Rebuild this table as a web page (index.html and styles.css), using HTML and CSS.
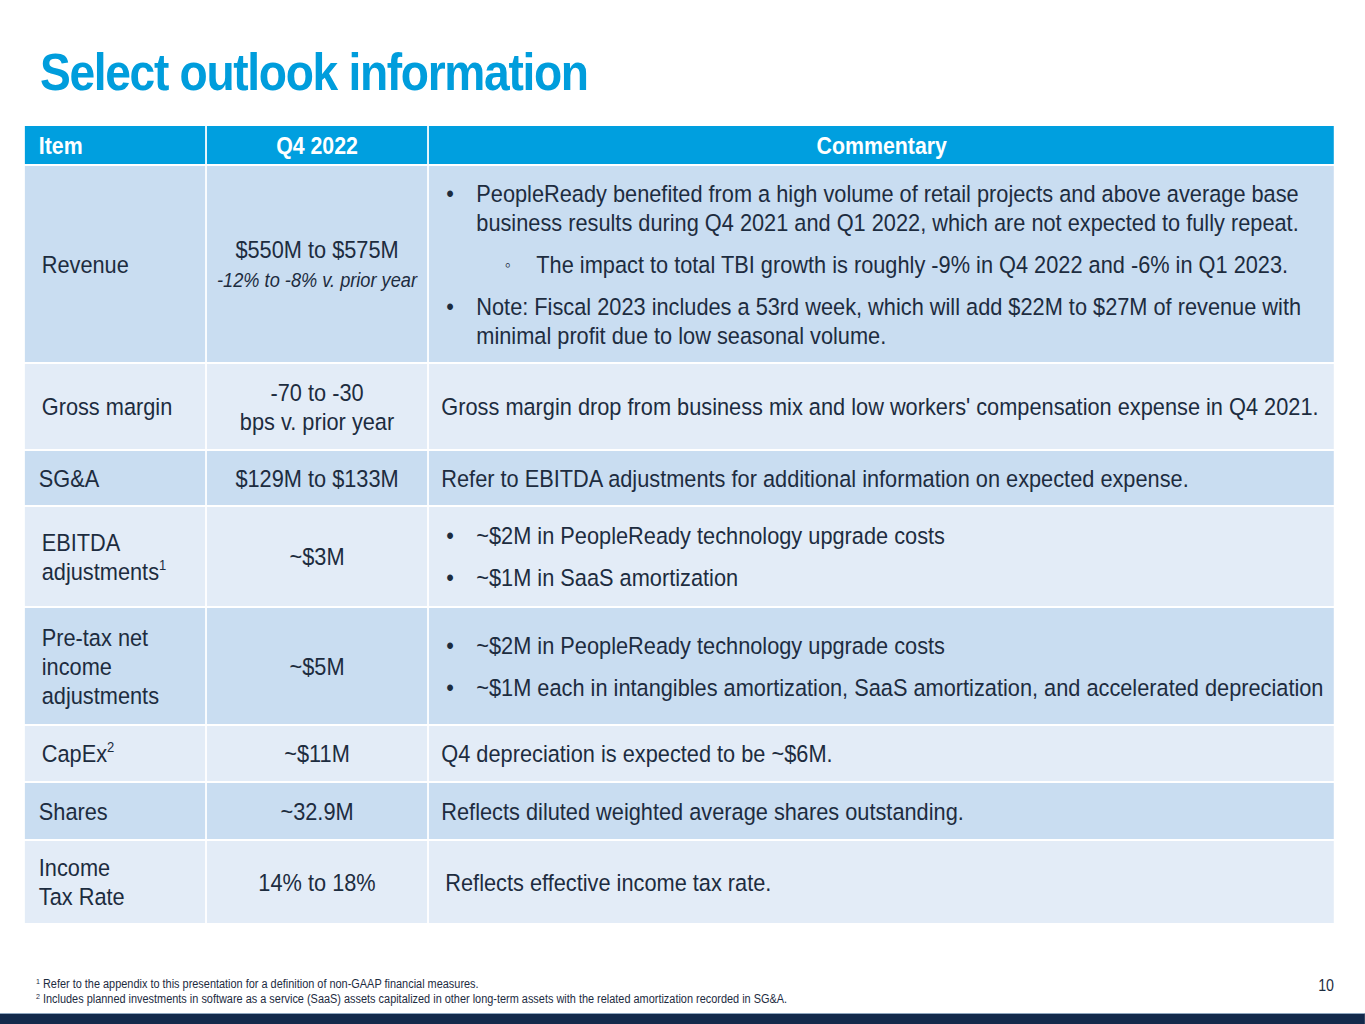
FILE: index.html
```html
<!DOCTYPE html>
<html lang="en">
<head>
<meta charset="utf-8">
<title>Select outlook information</title>
<link rel="stylesheet" href="styles.css">
</head>
<body>
<div class="frame">
<div class="slide">
  <h1 class="title">Select outlook information</h1>
  <table class="outlook">
    <colgroup>
      <col class="w-item">
      <col class="w-q">
      <col class="w-com">
    </colgroup>
    <thead>
      <tr class="r-head">
        <th class="h-item">Item</th>
        <th class="h-q">Q4 2022</th>
        <th class="h-com">Commentary</th>
      </tr>
    </thead>
    <tbody>
      <tr class="dark r-rev">
        <td class="c-item">Revenue</td>
        <td class="c-q">$550M to $575M<br><span class="sub">-12% to -8% v. prior year</span></td>
        <td class="c-com">
          <ul class="bul">
            <li>PeopleReady benefited from a high volume of retail projects and above average base business results during Q4 2021 and Q1 2022, which are not expected to fully repeat.
              <ul class="sub-bul"><li>The impact to total TBI growth is roughly -9% in Q4 2022 and -6% in Q1 2023.</li></ul>
            </li>
            <li>Note: Fiscal 2023 includes a 53rd week, which will add $22M to $27M of revenue with minimal profit due to low seasonal volume.</li>
          </ul>
        </td>
      </tr>
      <tr class="light r-gm">
        <td class="c-item">Gross margin</td>
        <td class="c-q">-70 to -30<br>bps v. prior year</td>
        <td class="c-com plain">Gross margin drop from business mix and low workers' compensation expense in Q4 2021.</td>
      </tr>
      <tr class="dark r-sga">
        <td class="c-item tight">SG&amp;A</td>
        <td class="c-q">$129M to $133M</td>
        <td class="c-com plain">Refer to EBITDA adjustments for additional information on expected expense.</td>
      </tr>
      <tr class="light r-ebitda">
        <td class="c-item">EBITDA<br>adjustments<sup>1</sup></td>
        <td class="c-q">~$3M</td>
        <td class="c-com">
          <ul class="bul">
            <li>~$2M in PeopleReady technology upgrade costs</li>
            <li>~$1M in SaaS amortization</li>
          </ul>
        </td>
      </tr>
      <tr class="dark r-pretax">
        <td class="c-item">Pre-tax net<br>income<br>adjustments</td>
        <td class="c-q">~$5M</td>
        <td class="c-com">
          <ul class="bul">
            <li>~$2M in PeopleReady technology upgrade costs</li>
            <li>~$1M each in intangibles amortization, SaaS amortization, and accelerated depreciation</li>
          </ul>
        </td>
      </tr>
      <tr class="light r-capex">
        <td class="c-item">CapEx<sup>2</sup></td>
        <td class="c-q">~$11M</td>
        <td class="c-com plain">Q4 depreciation is expected to be ~$6M.</td>
      </tr>
      <tr class="dark r-shares">
        <td class="c-item tight">Shares</td>
        <td class="c-q">~32.9M</td>
        <td class="c-com plain">Reflects diluted weighted average shares outstanding.</td>
      </tr>
      <tr class="light r-tax">
        <td class="c-item tight">Income<br>Tax Rate</td>
        <td class="c-q">14% to 18%</td>
        <td class="c-com plain shift">Reflects effective income tax rate.</td>
      </tr>
    </tbody>
  </table>
  <div class="foot">
    <div class="notes">
      <p><sup>1</sup> Refer to the appendix to this presentation for a definition of non-GAAP financial measures.</p>
      <p><sup>2</sup> Includes planned investments in software as a service (SaaS) assets capitalized in other long-term assets with the related amortization recorded in SG&amp;A.</p>
    </div>
    <div class="page">10</div>
  </div>
  <div class="bar"></div>
</div>
</div>
</body>
</html>
```

FILE: styles.css
```css
* { box-sizing: border-box; }
html, body { margin: 0; padding: 0; background: #ffffff; overflow: hidden; }
body {
  font-family: "Liberation Sans", Arial, sans-serif;
  color: #1d2c3f;
}
.frame {
  width: 1365px;
  height: 1024px;
  overflow: hidden;
}
/* The deck uses a narrow face; Liberation Sans is condensed horizontally to match.
   Horizontal sizes below are in pre-condensed units (target / 0.888). */
.slide {
  width: 1537.2px;
  height: 1024px;
  display: flex;
  flex-direction: column;
  transform: scaleX(0.888);
  transform-origin: 0 0;
}
.title {
  margin: 40px 0 0 45px;
  height: 84px;
  font-size: 52px;
  line-height: 64px;
  font-weight: bold;
  color: #009ddc;
  letter-spacing: -1.5px;
}
.outlook {
  margin-left: 25.9px;
  width: 1478.6px;
  border-collapse: separate;
  border-spacing: 2.25px 2px;
  font-size: 24.5px;
  line-height: 29px;
  table-layout: fixed;
}
.w-item { width: 202.7px; }
.w-q { width: 248.9px; }
.w-com { width: auto; }
.outlook th, .outlook td {
  padding: 0;
  vertical-align: middle;
}
.outlook th {
  background: #009fdf;
  color: #ffffff;
  font-weight: bold;
  height: 38px;
  font-size: 24px;
  text-align: center;
}
.outlook th.h-item { text-align: left; padding-left: 15.8px; }
.c-item { padding-left: 19.1px; text-align: left; }
.outlook td.c-item { padding-left: 19.1px; }
.outlook td.c-item.tight { padding-left: 15.8px; }
.c-q { text-align: center; }
.outlook td.c-com { padding-left: 19.1px; padding-right: 2px; }
.outlook td.c-com.plain { padding-left: 13.5px; }
.outlook td.c-com.shift { padding-left: 18px; }
.dark td { background: #c9ddf1; }
.light td { background: #e3ecf7; }
.r-rev { height: 196px; }
.r-gm { height: 85px; }
.r-sga { height: 54px; }
.r-ebitda { height: 99px; }
.r-pretax { height: 116px; }
.r-capex { height: 55px; }
.r-shares { height: 56px; }
.r-tax { height: 82px; }
.sub {
  font-style: italic;
  font-size: 20.5px;
  line-height: 26px;
}
sup {
  font-size: 0.6em;
  line-height: 0;
  vertical-align: 0.7em;
}
.bul {
  list-style: none;
  margin: 0;
  padding: 0;
}
.bul > li {
  position: relative;
  padding-left: 33.8px;
  margin: 13px 0 0;
}
.bul > li:first-child { margin-top: 0; }
.bul > li::before {
  content: "\2022";
  position: absolute;
  left: 0;
  top: 0;
}
.sub-bul {
  list-style: none;
  margin: 13px 0 0;
  padding: 0;
}
.sub-bul > li {
  position: relative;
  padding-left: 67.6px;
}
.sub-bul > li::before {
  content: "\25E6";
  position: absolute;
  left: 32px;
  top: 0;
  font-size: 19px;
}
.foot {
  margin-top: auto;
  display: flex;
  justify-content: space-between;
  align-items: flex-end;
  padding: 0 35px 6px 40.5px;
}
.notes p {
  margin: 0;
  font-size: 12.3px;
  line-height: 15px;
  color: #1d2c3f;
}
.notes sup { font-size: 8px; vertical-align: 4px; }
.page {
  font-size: 16px;
  line-height: 18px;
  margin-bottom: 12px;
  color: #1d2c3f;
}
.bar {
  height: 11px;
  background: #13294b;
  border-top: 1px solid #8fa6bf;
}
```
